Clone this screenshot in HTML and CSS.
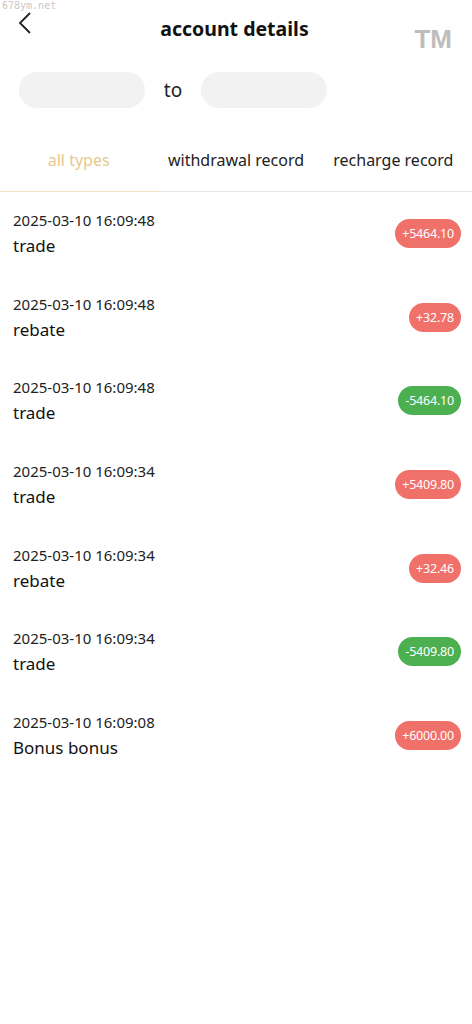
FILE: index.html
```html
<!DOCTYPE html>
<html lang="en">
<head>
  <meta charset="UTF-8">
  <meta name="viewport" content="width=device-width, initial-scale=1.0">
  <title>account details</title>
  <link rel="stylesheet" href="styles.css">
</head>
<body>
  <div class="page">
    <div class="watermark">678ym.net</div>
    <div class="header">
      <span class="back-btn">
        <svg width="16" height="22" viewBox="0 0 16 22"><path d="M13 1 L3 11 L13 21" fill="none" stroke="#222" stroke-width="1.8"/></svg>
      </span>
      <h1>account details</h1>
      <span class="tm">TM</span>
    </div>
    <div class="date-range">
      <div class="date-box"></div>
      <span class="to">to</span>
      <div class="date-box"></div>
    </div>
    <div class="tabs">
      <div class="tab active">all types</div>
      <div class="tab">withdrawal record</div>
      <div class="tab">recharge record</div>
    </div>
    <div class="records">
      <div class="record">
        <div class="info"><div class="time">2025-03-10 16:09:48</div><div class="type">trade</div></div>
        <span class="amount plus">+5464.10</span>
      </div>
      <div class="record">
        <div class="info"><div class="time">2025-03-10 16:09:48</div><div class="type">rebate</div></div>
        <span class="amount plus">+32.78</span>
      </div>
      <div class="record">
        <div class="info"><div class="time">2025-03-10 16:09:48</div><div class="type">trade</div></div>
        <span class="amount minus">-5464.10</span>
      </div>
      <div class="record">
        <div class="info"><div class="time">2025-03-10 16:09:34</div><div class="type">trade</div></div>
        <span class="amount plus">+5409.80</span>
      </div>
      <div class="record">
        <div class="info"><div class="time">2025-03-10 16:09:34</div><div class="type">rebate</div></div>
        <span class="amount plus">+32.46</span>
      </div>
      <div class="record">
        <div class="info"><div class="time">2025-03-10 16:09:34</div><div class="type">trade</div></div>
        <span class="amount minus">-5409.80</span>
      </div>
      <div class="record">
        <div class="info"><div class="time">2025-03-10 16:09:08</div><div class="type">Bonus bonus</div></div>
        <span class="amount plus">+6000.00</span>
      </div>
    </div>
  </div>
</body>
</html>
```
FILE: styles.css
```css
body {
  margin: 0;
  font-family: 'Noto Sans', 'Open Sans', sans-serif;
  background: #fff;
  color: #222;
}
.page {
  width: 472px;
  min-height: 1024px;
}
.watermark {
  height: 0;
  padding-left: 2px;
  font-family: 'DejaVu Sans Mono', monospace;
  font-size: 10px;
  line-height: 11px;
  color: #c8c8c8;
}
.header {
  display: grid;
  grid-template-columns: 1fr auto 1fr;
  align-items: center;
  height: 56px;
  padding: 0 20px 0 17px;
}
.back-btn {
  display: flex;
  margin-top: -10px;
}
.header h1 {
  margin: 0;
  font-size: 19.5px;
  font-weight: 700;
  color: #111;
}
.tm {
  justify-self: end;
  margin-top: 22px;
  font-family: 'Liberation Sans', sans-serif;
  font-size: 26px;
  font-weight: 700;
  color: #bdbdbd;
}
.date-range {
  display: flex;
  align-items: center;
  padding: 16px 19px 0;
}
.date-box {
  width: 126px;
  height: 36px;
  border-radius: 18px;
  background: #f2f2f2;
}
.to {
  width: 56px;
  text-align: center;
  font-size: 19px;
  color: #222;
}
.tabs {
  display: flex;
  margin-top: 32px;
  border-bottom: 1px solid #e6e6e6;
}
.tab {
  flex: 1;
  text-align: center;
  font-size: 16px;
  line-height: 22px;
  padding: 9px 0 20px;
  color: #222;
  border-bottom: 1px solid transparent;
  margin-bottom: -1px;
}
.tab.active {
  color: #e6c98f;
  border-bottom-color: #f3e4c6;
}
.record {
  display: flex;
  align-items: center;
  justify-content: space-between;
  height: 83.6px;
  padding: 0 11px 0 13px;
  box-sizing: border-box;
}
.info {
  display: flex;
  flex-direction: column;
  gap: 5px;
}
.time {
  font-size: 15px;
  line-height: 20px;
  color: #222;
}
.type {
  font-size: 17px;
  line-height: 22px;
  color: #111;
}
.amount {
  padding: 0 7px;
  height: 29px;
  line-height: 29px;
  border-radius: 15px;
  font-size: 12.5px;
  letter-spacing: -0.2px;
  color: #fff;
}
.amount.plus {
  background: #f0706a;
}
.amount.minus {
  background: #4caf50;
}
```
